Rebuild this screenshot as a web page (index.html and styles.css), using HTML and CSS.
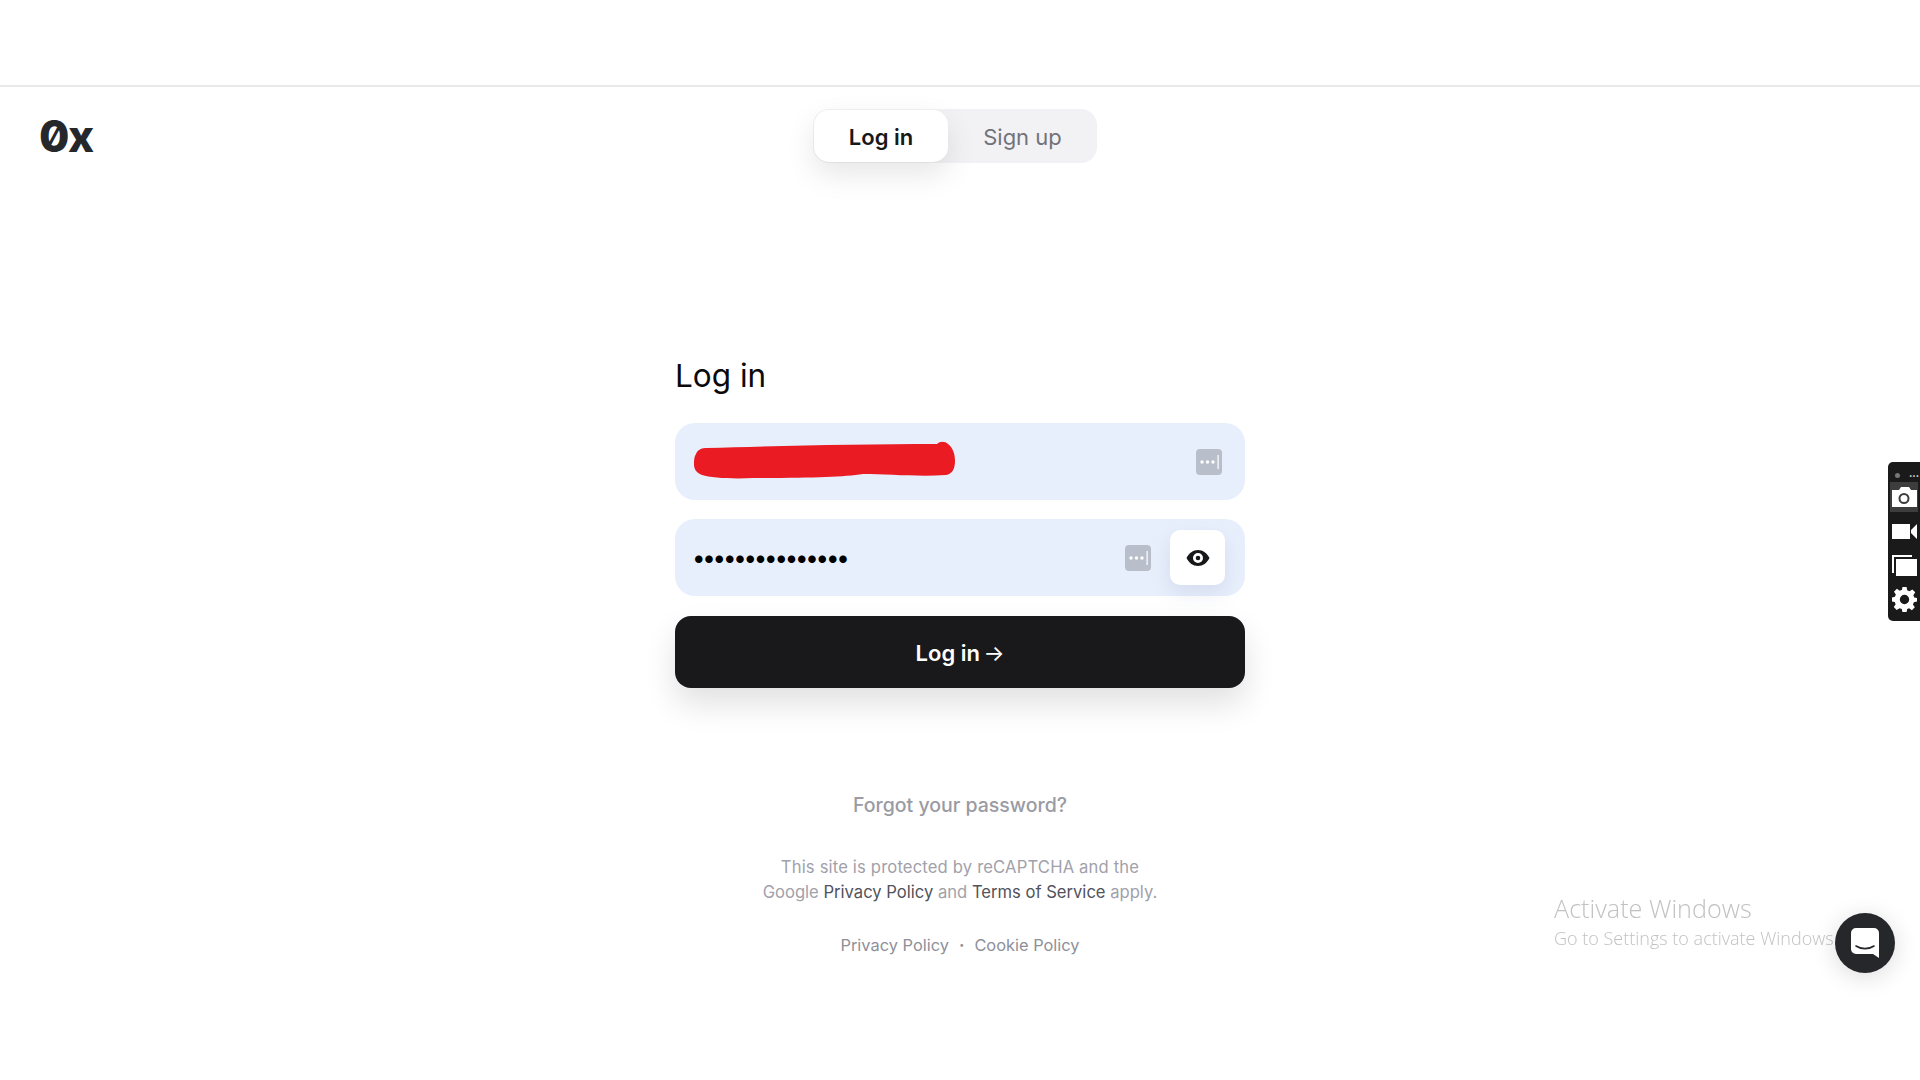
FILE: index.html
```html
<!DOCTYPE html>
<html lang="en">
<head>
    <meta charset="UTF-8">
    <meta name="viewport" content="width=device-width, initial-scale=1.0">
    <title>Log in</title>
    <link rel="stylesheet" href="styles.css">
</head>
<body>
    <div class="top-band"></div>

    <header class="site-header">
        <div class="logo">0x</div>
        <nav class="switcher">
            <a class="switcher-item active">Log in</a>
            <a class="switcher-item">Sign up</a>
        </nav>
    </header>

    <main class="login">
        <h1>Log in</h1>
        <form class="login-form">
            <div class="field">
                <input type="text" class="field-input" aria-label="Email">
                <svg class="redaction" width="264" height="40" viewBox="0 0 264 40">
                    <path fill="#ea1b23" d="M3 13 C5 8 9 7 14 7 C80 5 170 3 244 3 C247 0 252 0 255 3 C260 7 262 13 262 20 C262 28 259 33 253 34 C225 36 195 33 170 33 C150 36 120 37 60 37 C40 38 18 37 9 34 C3 32 1 27 1 24 C1 19 1 16 3 13 Z"/>
                </svg>
                <svg class="key-icon" width="26" height="26" viewBox="0 0 26 26">
                    <rect width="26" height="26" rx="4" fill="#b9bfca"/>
                    <circle cx="6" cy="13" r="1.7" fill="#fff"/>
                    <circle cx="11.5" cy="13" r="1.7" fill="#fff"/>
                    <circle cx="17" cy="13" r="1.7" fill="#fff"/>
                    <rect x="21.5" y="6" width="1.2" height="14" fill="#fff"/>
                </svg>
            </div>
            <div class="field">
                <input type="password" class="field-input password" value="password1234567" aria-label="Password">
                <svg class="key-icon" width="26" height="26" viewBox="0 0 26 26">
                    <rect width="26" height="26" rx="4" fill="#b9bfca"/>
                    <circle cx="6" cy="13" r="1.7" fill="#fff"/>
                    <circle cx="11.5" cy="13" r="1.7" fill="#fff"/>
                    <circle cx="17" cy="13" r="1.7" fill="#fff"/>
                    <rect x="21.5" y="6" width="1.2" height="14" fill="#fff"/>
                </svg>
                <button type="button" class="eye-btn" aria-label="Show password">
                    <svg width="24" height="18" viewBox="0 0 24 18">
                        <path fill="#17181a" fill-rule="evenodd" d="M12 1 C17 1 21 4 23.5 9 C21 14 17 17 12 17 C7 17 3 14 .5 9 C3 4 7 1 12 1 Z M12 4 A5 5 0 1 0 12 14 A5 5 0 1 0 12 4 Z M12 6.7 A2.3 2.3 0 1 1 12 11.3 A2.3 2.3 0 1 1 12 6.7 Z"/>
                    </svg>
                </button>
            </div>
            <button type="submit" class="submit-btn">Log in <span class="arrow">→</span></button>
        </form>

        <a class="forgot">Forgot your password?</a>

        <p class="recaptcha">
            <span class="recaptcha-lead">This site is protected by reCAPTCHA and the</span><br>
            Google <a>Privacy Policy</a> and <a>Terms of Service</a> apply.
        </p>

        <footer class="legal">
            <a>Privacy Policy</a>
            <span class="legal-dot">·</span>
            <a>Cookie Policy</a>
        </footer>
    </main>

    <aside class="capture-bar">
        <div class="capture-head">
            <span class="capture-pin"></span>
            <span class="capture-more">•••</span>
        </div>
        <div class="capture-btn selected">
            <svg width="25" height="20" viewBox="0 0 25 20">
                <path fill="#fff" fill-rule="evenodd" d="M0 3 H7 L9 0 H17 L19 3 H25 V20 H0 Z M12 6 A5.5 5.5 0 1 0 12 17 A5.5 5.5 0 1 0 12 6 Z M12 8 A3.5 3.5 0 1 1 12 15 A3.5 3.5 0 1 1 12 8 Z"/>
            </svg>
        </div>
        <div class="capture-btn">
            <svg width="25" height="15" viewBox="0 0 25 15">
                <path fill="#fff" d="M0 0 H18 V15 H0 Z M19 6 L25 0 V15 L19 9 Z"/>
            </svg>
        </div>
        <div class="capture-btn">
            <svg width="25" height="21" viewBox="0 0 25 21">
                <path fill="#fff" d="M0 0 H20 V2 H2 V18 H0 Z M4 4 H25 V21 H4 Z"/>
            </svg>
        </div>
        <div class="capture-btn">
            <svg width="25" height="25" viewBox="0 0 24 24">
                <path fill="#fff" fill-rule="evenodd" d="M10 0 H14 L14.6 3.2 L16.8 4.1 L19.5 2.3 L22.3 5.1 L20.5 7.8 L21.4 10 L24 10.5 V14 L21 14.6 L20.1 16.8 L21.9 19.5 L19.1 22.3 L16.4 20.5 L14.6 21.2 L14 24 H10 L9.4 21.2 L7.2 20.3 L4.5 22.1 L1.7 19.3 L3.5 16.6 L2.6 14.4 L0 14 V10 L2.8 9.4 L3.7 7.2 L1.9 4.5 L4.7 1.7 L7.4 3.5 L9.6 2.6 Z M12 7.5 A4.5 4.5 0 1 0 12 16.5 A4.5 4.5 0 1 0 12 7.5 Z"/>
            </svg>
        </div>
    </aside>

    <div class="activate">
        <div class="activate-title">Activate Windows</div>
        <div class="activate-sub">Go to Settings to activate Windows.</div>
    </div>

    <button type="button" class="chat-bubble" aria-label="Open chat">
        <svg width="28" height="30" viewBox="0 0 28 30">
            <path fill="#fff" d="M5 0 H23 A5 5 0 0 1 28 5 V30 L22 26 H5 A5 5 0 0 1 0 21 V5 A5 5 0 0 1 5 0 Z"/>
            <path fill="none" stroke="#26272b" stroke-width="1.6" stroke-linecap="round" d="M5 18 C10 21.5 18 21.5 23 18"/>
        </svg>
    </button>
</body>
</html>
```

FILE: styles.css
```css
* {
    margin: 0;
    padding: 0;
    box-sizing: border-box;
}

html, body {
    height: 100%;
    overflow: hidden;
}

body {
    font-family: 'Inter', 'Liberation Sans', sans-serif;
    background: #fff;
    color: #17181a;
}

.top-band {
    height: 87px;
    border-bottom: 2px solid #e9e9e9;
}

.site-header {
    display: flex;
    align-items: center;
    gap: 720px;
    height: 54px;
    margin-top: 22px;
    padding-left: 39px;
}

.logo {
    width: 54px;
    font-size: 44px;
    font-weight: 800;
    letter-spacing: -1.5px;
    line-height: 54px;
    color: #26272b;
    font-variant-numeric: slashed-zero;
}

.switcher {
    display: flex;
    width: 284px;
    height: 54px;
    padding: 1px;
    background: #f2f2f4;
    border-radius: 16px;
}

.switcher-item {
    display: flex;
    align-items: center;
    justify-content: center;
    flex: 1;
    padding: 2px 0 0 1px;
    font-size: 22px;
    color: #71717a;
}

.switcher-item.active {
    flex: none;
    width: 134px;
    padding-left: 0;
    background: #fff;
    border-radius: 15px;
    color: #17181a;
    font-weight: 600;
    box-shadow: 0 12px 30px rgba(0, 0, 0, 0.1);
}

.login {
    width: 570px;
    margin: 0 auto;
    padding-top: 193px;
}

h1 {
    font-size: 31.5px;
    font-weight: 400;
    line-height: 40px;
    color: #0a0a0a;
    margin-bottom: 27px;
}

.login-form {
    display: flex;
    flex-direction: column;
    gap: 19px;
}

.field {
    position: relative;
    display: flex;
    align-items: center;
    height: 77px;
    padding: 0 20px 0 18px;
    background: #e8effc;
    border-radius: 20px;
}

.field-input {
    flex: 1;
    min-width: 0;
    height: 100%;
    border: none;
    outline: none;
    background: transparent;
    font-family: 'Inter', sans-serif;
    font-size: 18px;
}

.field-input.password {
    margin-left: -1px;
    font-size: 24px;
    letter-spacing: -3.2px;
    color: #000;
}

.redaction {
    position: absolute;
    left: 18px;
    top: 18px;
}

.key-icon {
    flex: none;
    margin-right: 3px;
}

.eye-btn {
    display: flex;
    align-items: center;
    justify-content: center;
    flex: none;
    width: 55px;
    height: 55px;
    margin-left: 16px;
    border: none;
    border-radius: 10px;
    background: #fff;
    box-shadow: 0 8px 20px rgba(120, 140, 180, 0.18);
}

.submit-btn {
    height: 72px;
    margin-top: 1px;
    padding-top: 2px;
    border: none;
    border-radius: 16px;
    background: #19191b;
    color: #fff;
    font-family: 'Inter', sans-serif;
    font-size: 22px;
    font-weight: 600;
    box-shadow: 0 16px 32px rgba(0, 0, 0, 0.12);
}

.arrow {
    margin-left: -2px;
    font-weight: 400;
}

.forgot {
    display: block;
    margin-top: 105px;
    text-align: center;
    font-size: 19.5px;
    font-weight: 500;
    line-height: 24px;
    color: #9a9ba3;
}

.recaptcha {
    margin-top: 38px;
    text-align: center;
    font-size: 16.6px;
    line-height: 25px;
    color: #a1a1aa;
}

.recaptcha-lead {
    letter-spacing: 0.17px;
}

.recaptcha a {
    color: #52525b;
}

.legal {
    display: flex;
    justify-content: center;
    align-items: center;
    gap: 10px;
    margin-top: 28px;
    font-size: 16.4px;
    line-height: 25px;
    color: #8e8f99;
}

.legal-dot {
    font-weight: 700;
}

.capture-bar {
    position: fixed;
    right: 0;
    top: 462px;
    width: 32px;
    height: 159px;
    padding-top: 6px;
    background: #1a1a1a;
    border-radius: 5px 0 0 5px;
}

.capture-head {
    display: flex;
    justify-content: space-between;
    align-items: center;
    height: 14px;
    padding: 0 1px 0 7px;
    color: #ddd;
    font-size: 6px;
}

.capture-pin {
    width: 5px;
    height: 5px;
    border-radius: 50%;
    background: #777;
}

.capture-btn {
    display: flex;
    align-items: center;
    justify-content: center;
    height: 33.5px;
}

.capture-btn.selected {
    height: 30px;
    margin: 0 2px 3px 2px;
    background: #3d3d3d;
}

.capture-btn:last-child {
    padding-top: 2px;
}

.activate {
    position: fixed;
    left: 1554px;
    top: 891px;
    font-family: 'Open Sans', sans-serif;
    font-weight: 300;
    color: #c2c2c2;
}

.activate-title {
    font-size: 25.2px;
    line-height: 35px;
}

.activate-sub {
    font-size: 18px;
    line-height: 24px;
}

.chat-bubble {
    position: fixed;
    left: 1835px;
    top: 913px;
    display: flex;
    align-items: center;
    justify-content: center;
    width: 60px;
    height: 60px;
    border: none;
    border-radius: 50%;
    background: #26272b;
    box-shadow: 0 4px 24px rgba(0, 0, 0, 0.14);
}
```
